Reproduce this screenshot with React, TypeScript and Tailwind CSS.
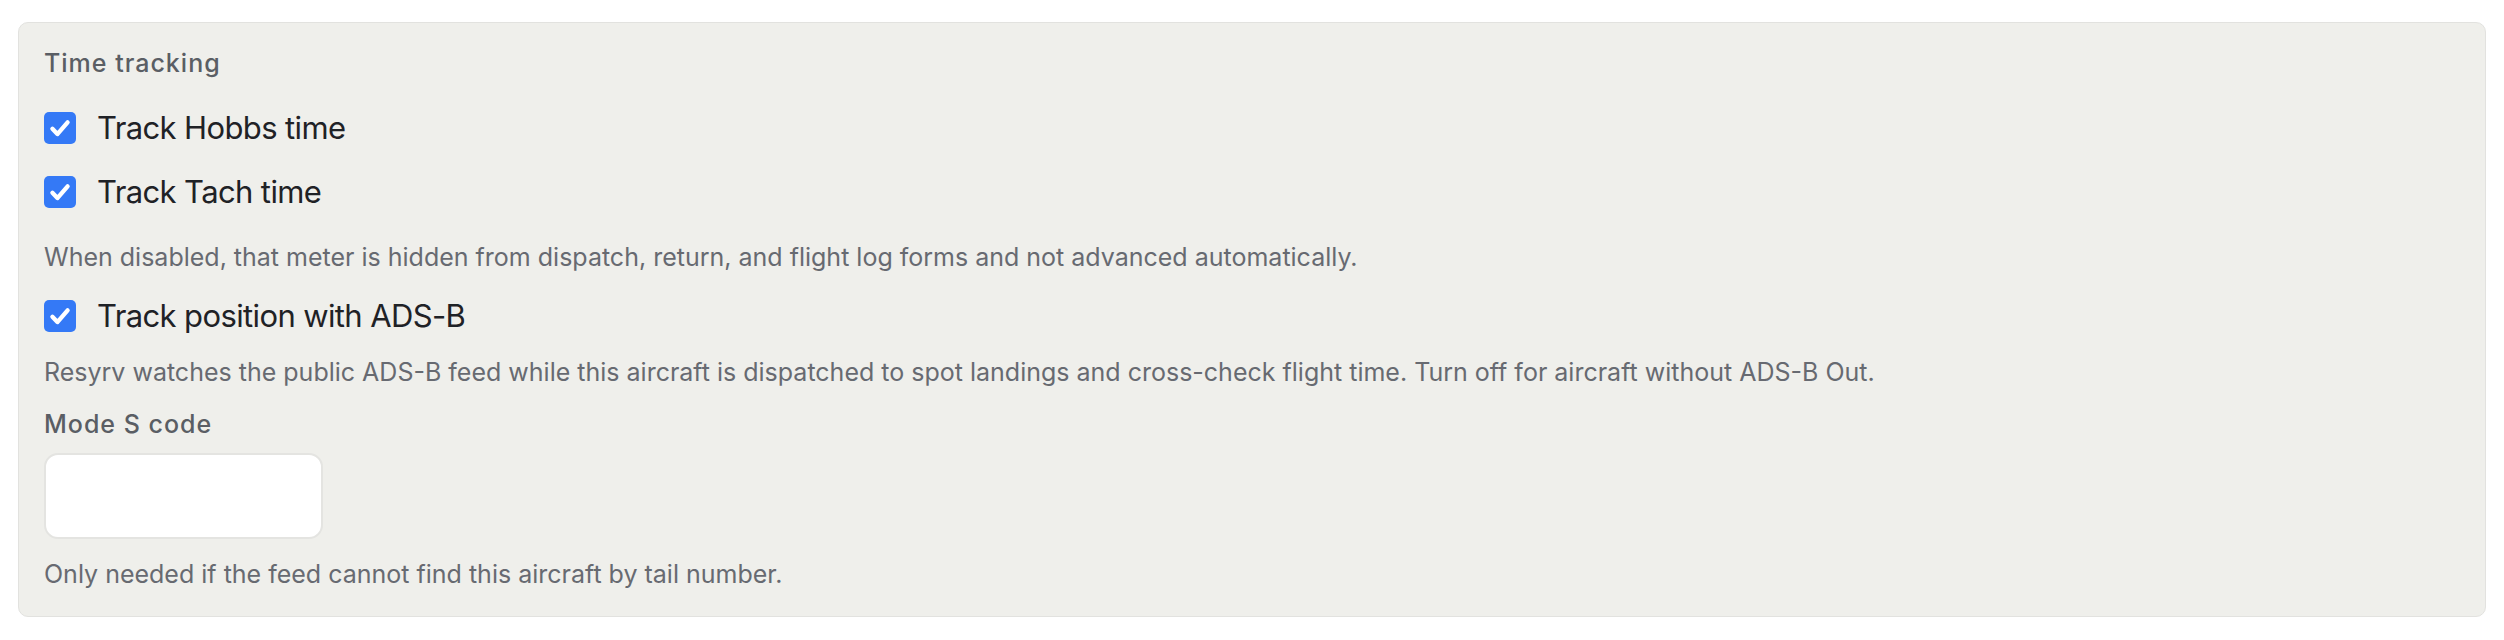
import React from "react";

function Check() {
  return (
    <span className="flex h-[32px] w-[32px] shrink-0 items-center justify-center rounded-[5px] bg-[#3479f6]">
      <svg viewBox="0 0 24 24" className="h-[26px] w-[26px]" fill="none">
        <path d="M5 12.8l4.6 4.8L19 6.8" stroke="#ffffff" strokeWidth="4" strokeLinecap="round" strokeLinejoin="round" />
      </svg>
    </span>
  );
}

function Row({ label }: { label: string }) {
  return (
    <label className="flex h-[40px] items-center gap-[21px]">
      <Check />
      <span className="text-[31px] leading-[40px] tracking-[-0.02em] text-[#1f2226]">{label}</span>
    </label>
  );
}

export default function App() {
  return (
    <div className="min-h-[640px] bg-white pt-[22px] px-[18px]" style={{ fontFamily: "Inter, 'Noto Sans', sans-serif" }}>
      <div className="rounded-[10px] border border-[#e2e2df] bg-[#efefeb] pl-[25px] pr-[25px] pt-[24px] pb-[26px]">
        <div className="text-[25px] leading-[32px] font-medium tracking-[0.04em] text-[#5a5e64]">Time tracking</div>
        <div className="mt-[29px]"><Row label="Track Hobbs time" /></div>
        <div className="mt-[24px]"><Row label="Track Tach time" /></div>
        <p className="mt-[29px] text-[25px] leading-[32px] text-[#676a71]">
          When disabled, that meter is hidden from dispatch, return, and flight log forms and not advanced automatically.
        </p>
        <div className="mt-[23px]"><Row label="Track position with ADS-B" /></div>
        <p className="mt-[20px] text-[25px] leading-[32px] text-[#676a71]">
          Resyrv watches the public ADS-B feed while this aircraft is dispatched to spot landings and cross-check flight time. Turn off for aircraft without ADS-B Out.
        </p>
        <div className="mt-[20px] text-[25px] leading-[32px] font-medium tracking-[0.04em] text-[#5a5e64]">Mode S code</div>
        <input className="mt-[13px] block h-[86px] w-[279px] rounded-[14px] border-2 border-[#e4e4e1] bg-white px-4 text-[24px] outline-none" />
        <p className="mt-[19px] text-[25px] leading-[32px] text-[#676a71]">
          Only needed if the feed cannot find this aircraft by tail number.
        </p>
      </div>
    </div>
  );
}
